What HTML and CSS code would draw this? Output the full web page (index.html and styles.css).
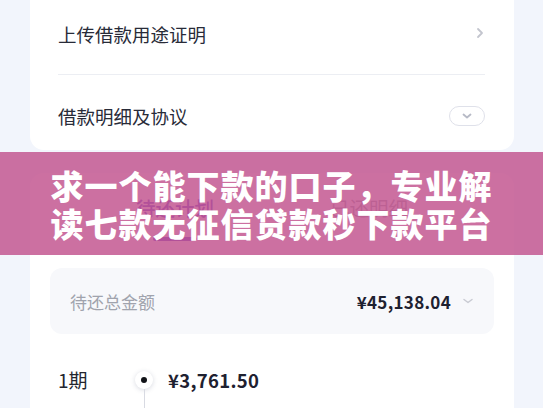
FILE: index.html
```html
<!DOCTYPE html>
<html lang="zh-CN">
<head>
<meta charset="utf-8">
<link rel="stylesheet" href="styles.css">
</head>
<body>
<div class="page">
  <section class="card card-top">
    <div class="row row-first">
      <span class="row-label">上传借款用途证明</span>
      <svg class="chev-right" width="8" height="12" viewBox="0 0 8 12"><path d="M2 2l4 4-4 4" fill="none" stroke="#c3c5ce" stroke-width="1.8" stroke-linecap="round" stroke-linejoin="round"/></svg>
    </div>
    <div class="divider"></div>
    <div class="row row-second">
      <span class="row-label">借款明细及协议</span>
      <span class="pill">
        <svg width="12" height="8" viewBox="0 0 12 8"><path d="M2.5 2.5l3.5 3 3.5-3" fill="none" stroke="#b7bac6" stroke-width="1.8" stroke-linecap="round" stroke-linejoin="round"/></svg>
      </span>
    </div>
  </section>

  <section class="card card-plan">
    <div class="tabs">
      <div class="tab tab-active">待还计划<span class="tab-bar"></span></div>
      <div class="tab">已还明细<span class="tab-bar tab-bar-hidden"></span></div>
    </div>
    <div class="total">
      <span class="total-label">待还总金额</span>
      <span class="total-right">
        <span class="total-amount">¥45,138.04</span>
        <svg width="12" height="8" viewBox="0 0 12 8"><path d="M2 2.5l4 3 4-3" fill="none" stroke="#c9cbd3" stroke-width="1.5" stroke-linecap="round" stroke-linejoin="round"/></svg>
      </span>
    </div>
    <div class="period">
      <div class="period-left">
        <div class="period-name">1期</div>
        <div class="period-date">2024/02/20</div>
      </div>
      <div class="period-mid">
        <span class="dot"><span class="dot-core"></span></span>
        <span class="line"></span>
      </div>
      <div class="period-right">
        <div class="period-amount">¥3,761.50</div>
        <div class="period-detail"><span>本金 ¥3,511.50</span><span>利息 ¥250.00</span></div>
      </div>
    </div>
  </section>
</div>

<div class="banner">
  <p class="banner-text">求一个能下款的口子，专业解<br>读七款无征信贷款秒下款平台</p>
</div>
</body>
</html>
```

FILE: styles.css
```css
* { box-sizing: border-box; }

html, body {
  margin: 0;
  padding: 0;
}

body {
  width: 543px;
  height: 408px;
  overflow: hidden;
  background: #f2f5fc;
  font-family: "Noto Sans CJK SC", "Noto Sans", sans-serif;
  color: #2b2e3b;
  position: relative;
}

.page {
  padding: 0 29px 0 30px;
}

.card {
  background: #ffffff;
}

.card-top {
  border-radius: 0 0 14px 14px;
  padding: 0 29px 0 28px;
}

.row {
  display: flex;
  align-items: center;
  justify-content: space-between;
  height: 74px;
}

.row-first {
  padding-bottom: 6px;
}

.row-second {
  height: 75px;
  padding-top: 6px;
}

.row-label {
  font-size: 18.5px;
  line-height: 26px;
  color: #282b38;
}

.chev-right {
  margin-right: 1px;
  margin-top: -2px;
}

.divider {
  height: 1px;
  background: #eceef3;
}

.pill {
  width: 36px;
  height: 20px;
  border: 1px solid #dfe1ea;
  border-radius: 10px;
  display: flex;
  align-items: center;
  justify-content: center;
}

.card-plan {
  margin-top: 23px;
  border-radius: 14px 14px 0 0;
  height: 240px;
  padding-top: 22px;
  overflow: hidden;
}

.tabs {
  display: flex;
  justify-content: center;
  gap: 116px;
}

.tab {
  display: flex;
  flex-direction: column;
  align-items: center;
  font-size: 19.5px;
  line-height: 26px;
  color: #8d909b;
}

.tab-active {
  color: #4a22c8;
  font-weight: 500;
}

.tab-bar {
  width: 44px;
  height: 4px;
  border-radius: 2px;
  background: #4a22c8;
  margin-top: 16px;
}

.tab-bar-hidden {
  visibility: hidden;
}

.total {
  margin: 27px 20px 0 20px;
  height: 66px;
  border-radius: 12px;
  background: #f7f8fb;
  display: flex;
  align-items: center;
  justify-content: space-between;
  padding: 0 20px;
}

.total-label {
  font-size: 17px;
  color: #a0a3ad;
}

.total-right {
  display: flex;
  align-items: center;
  gap: 11px;
}

.total-amount {
  font-size: 17px;
  font-weight: 600;
  color: #1e2130;
  letter-spacing: 0.3px;
}

.period {
  display: grid;
  grid-template-columns: 77px 18px 1fr;
  margin-top: 34px;
  padding-left: 28px;
}

.period-name {
  font-size: 19px;
  line-height: 24px;
  color: #23262f;
}

.period-date {
  margin-top: 12px;
  font-size: 14px;
  color: #a5a8b2;
}

.period-mid {
  display: flex;
  flex-direction: column;
  align-items: center;
  padding-top: 3px;
}

.dot {
  width: 18px;
  height: 18px;
  border-radius: 50%;
  background: #ffffff;
  box-shadow: 0 1px 5px rgba(40, 50, 90, 0.18);
  display: flex;
  align-items: center;
  justify-content: center;
}

.dot-core {
  width: 6px;
  height: 6px;
  border-radius: 50%;
  background: #111318;
}

.line {
  width: 1px;
  flex: 1;
  min-height: 30px;
  background: #d8dae2;
}

.period-right {
  padding-left: 15px;
}

.period-amount {
  font-size: 18.5px;
  line-height: 24px;
  font-weight: 600;
  color: #1e2130;
  letter-spacing: 0.3px;
}

.period-detail {
  margin-top: 12px;
  font-size: 14px;
  color: #a5a8b2;
  display: flex;
  gap: 60px;
}

.banner {
  position: absolute;
  left: 0;
  top: 152px;
  width: 543px;
  height: 103px;
  background: rgba(196, 88, 146, 0.86);
  display: flex;
  align-items: center;
  justify-content: center;
}

.banner-text {
  margin: 0;
  font-size: 33px;
  line-height: 38px;
  font-weight: 900;
  letter-spacing: 1px;
  color: #ffffff;
  text-align: center;
}
```
